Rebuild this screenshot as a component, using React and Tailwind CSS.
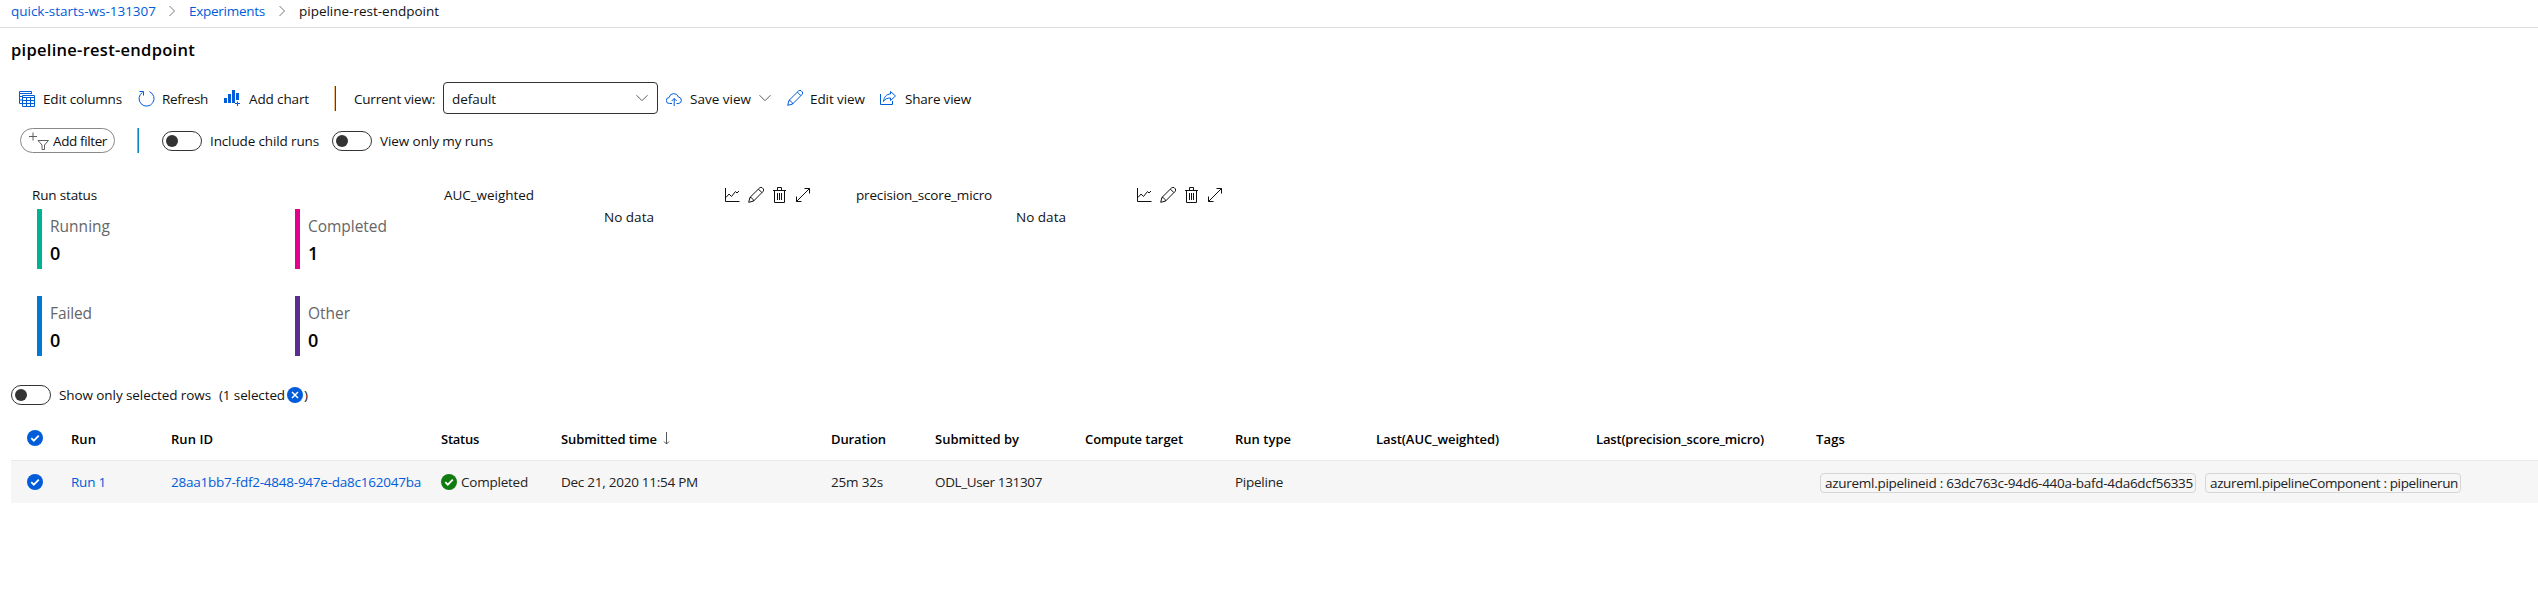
import { useLayoutEffect, useRef } from "react";

// Text run whose tracking is adjusted so that it fills a given width.
function T({ w, className = "", children }) {
  const ref = useRef(null);
  useLayoutEffect(() => {
    const el = ref.current;
    el.style.letterSpacing = "0px";
    const natural = el.getBoundingClientRect().width;
    el.style.letterSpacing = (w - natural) / el.textContent.length + "px";
  }, [w]);
  return (
    <span ref={ref} className={"inline-block w-max shrink-0 whitespace-pre " + className}>
      {children}
    </span>
  );
}

function Svg({ className = "", box = 16, children }) {
  return (
    <svg
      className={"block shrink-0 " + className}
      viewBox={`0 0 ${box} ${box}`}
      fill="none"
      stroke="currentColor"
      strokeWidth="1"
    >
      {children}
    </svg>
  );
}

const Right = ({ className = "" }) => (
  <Svg className={"h-3 w-3 text-[#777] " + className} box={12}>
    <path d="M3.5 1l5 5-5 5" />
  </Svg>
);
const Down = ({ className = "" }) => (
  <Svg className={"h-3 w-3 text-[#605e5c] " + className} box={12}>
    <path d="M.5 3.2L6 8.7l5.500-5.500" />
  </Svg>
);
const Pencil = ({ className = "" }) => (
  <Svg className={"h-4 w-4 " + className}>
    <path d="M.7 15.300l1.200-4.800L11.600.9a1.900 1.900 0 012.700 0l.8.8a1.900 1.900 0 010 2.700L5.500 14.100zM1.900 10.500c1.900 0 3.600 1.700 3.600 3.600M10.400 2.100l3.500 3.500" />
  </Svg>
);
const Check = ({ className = "" }) => (
  <Svg className={"h-4 w-4 " + className}>
    <circle cx="8" cy="8" r="8" fill="currentColor" stroke="none" />
    <path d="M4.300 8.200l2.500 2.500 5-5" stroke="#fff" strokeWidth="1.800" />
  </Svg>
);

function Toggle({ className = "" }) {
  return (
    <span className={"flex h-5 w-10 shrink-0 items-center rounded-full border border-[#333] bg-white pl-[3px] " + className}>
      <span className="h-3 w-3 rounded-full bg-[#333]" />
    </span>
  );
}

function Stat({ bar, label, w, value }) {
  return (
    <div className="flex h-[60px] w-[258px]">
      <div className={"w-[5px] shrink-0 " + bar} />
      <div className="pl-2 pt-[6px]">
        <T w={w} className="block text-[15.500px] leading-[22px] text-[#666]">{label}</T>
        <div className="mt-[3px] text-[18px] font-semibold leading-[26px] text-black">{value}</div>
      </div>
    </div>
  );
}

function Metric({ title, w }) {
  return (
    <section className="w-[412px]">
      <div className="flex h-5 items-center">
        <div className="w-[280px]"><T w={w}>{title}</T></div>
        <Svg className="h-4 w-4">
          <path d="M1.500 1v13.500H15.500M2 10.500l3-3.500 2.500 2.500 4-5 1.500 1.500L15 4" />
        </Svg>
        <Pencil className="ml-2" />
        <Svg className="ml-[7px] h-4 w-4">
          <path d="M2 3.500h13M6.500 3V.5h4V3M3.500 3.500v12h10v-12M6.500 6v7M8.500 6v7M10.500 6v7" />
        </Svg>
        <Svg className="ml-2 h-4 w-4">
          <path d="M1.500 14.500l13-13M9.500 1.500H14.500V6.500M1.500 9.500v5H6.500" />
        </Svg>
      </div>
      <div className="flex h-6 items-center pl-[160px]"><T w={50}>No data</T></div>
    </section>
  );
}

const columns =
  "grid grid-cols-[60px_100px_270px_120px_270px_104px_150px_150px_141px_220px_220px_1fr] items-center justify-items-start";

export default function App() {
  return (
    <div className="h-[609px] w-[2538px] overflow-hidden bg-white font-['Open_Sans','Noto_Sans',sans-serif] text-[13.500px] leading-5 text-[#111]">
      <nav className="flex h-7 items-center border-b border-[#ddd] pb-[6px] pl-[11px] text-[#015cda]">
        <T w={145}>quick-starts-ws-131307</T>
        <Right className="ml-[10px]" />
        <T w={76} className="ml-[11px]">Experiments</T>
        <Right className="ml-[11px]" />
        <T w={140} className="ml-[11px] text-[#111]">pipeline-rest-endpoint</T>
      </nav>

      <h1 className="flex h-[44px] items-center pl-[11px] text-[16.500px] font-semibold text-black">
        <T w={184}>pipeline-rest-endpoint</T>
      </h1>

      <div className="mt-[10px] flex h-8 items-center pl-[19px]">
        <Svg className="mt-px h-4 w-4 text-[#015cda]">
          <path d="M3 12.500H.5V.5h12V3M.5 2.500h12M3.500 4.500h12v11h-12zM3.500 6.500h12M3.500 9.500h12M3.500 12.500h12M7.500 6v9.500M11.500 6v9.500M.5 5.500H3M.5 9H3" />
        </Svg>
        <T w={79} className="ml-2 pt-px">Edit columns</T>
        <Svg className="ml-4 h-[17px] w-[17px] text-[#015cda]" box={17}>
          <path d="M11.500 1.700A7.500 7.500 0 114.500 2.300M1.500 1.500h4v4" />
        </Svg>
        <T w={46} className="ml-[7px] pt-px">Refresh</T>
        <Svg className="ml-4 h-4 w-4 text-[#015cda]">
          <path d="M0 8h3v5H0zM4 4h3v9H4zM8 0h3v13H8zM12 3h3v7h-3z" fill="currentColor" stroke="none" />
          <path d="M13.500 11.500V16M11 13.500h5" />
        </Svg>
        <T w={60} className="ml-[9px] pt-px">Add chart</T>
        <span className="ml-[25px] h-[25px] w-0.5 border-l border-r border-l-[#f0bd85] border-r-[#0a4f8f]" />
        <T w={81} className="ml-[18px] pt-px">Current view:</T>
        <div className="ml-2 flex h-8 w-[215px] items-center justify-between rounded-sm border border-[#333] pl-2 pr-[9px]">
          <T w={44} className="pt-px">default</T>
          <Down />
        </div>
        <Svg className="ml-2 mt-px h-4 w-4 text-[#015cda]">
          <path d="M6 12.500H3.500a3 3 0 01-.4-6 4.800 4.800 0 019.300-.5 3.300 3.300 0 01.4 6.500H10.500M8.200 15V7.500M5.700 10l2.500-2.500 2.500 2.500" />
        </Svg>
        <T w={61} className="ml-2 pt-px">Save view</T>
        <Down className="ml-2" />
        <Pencil className="ml-4 text-[#015cda]" />
        <T w={55} className="ml-[7px] pt-px">Edit view</T>
        <Svg className="ml-[15px] h-4 w-4 text-[#015cda]">
          <path d="M.5 4v10.500h12V11M10.500 1.500l5 4.500-5 4.500V8C7 8 5 9 3.500 11.500 4 7 6.500 4 10.500 4z" />
        </Svg>
        <T w={66} className="ml-[9px] pt-px">Share view</T>
      </div>

      <div className="mt-[14px] flex h-[25px] items-center pl-5">
        <div className="flex h-[25px] w-[95px] items-center rounded-full border border-[#8a8886] pl-2">
          <Svg className="h-5 w-5 text-[#605e5c]" box={20}>
            <path d="M0 5.500h8M4 1.500v8M9 9.500h10.500l-4 4.500v4.500h-2.500V14z" />
          </Svg>
          <T w={54} className="ml-1">Add filter</T>
        </div>
        <span className="ml-[22px] h-[25px] w-0.5 border-l border-r border-l-[#d99a4e] border-r-[#0a86bd]" />
        <Toggle className="ml-[23px]" />
        <T w={109} className="ml-2">Include child runs</T>
        <Toggle className="ml-[13px]" />
        <T w={113} className="ml-2">View only my runs</T>
      </div>

      <div className="mt-[32px] flex h-[171px]">
        <section className="w-[412px] pl-8">
          <div className="flex h-5 items-center"><T w={65}>Run status</T></div>
          <div className="mt-[4px] flex flex-wrap gap-y-[27px] pl-[5px]">
            <Stat bar="bg-[#00b294]" label="Running" w={60} value="0" />
            <div className="w-[117px]"><Stat bar="bg-[#e3008c]" label="Completed" w={79} value="1" /></div>
            <Stat bar="bg-[#0078d4]" label="Failed" w={42} value="0" />
            <div className="w-[117px]"><Stat bar="bg-[#5c2d91]" label="Other" w={42} value="0" /></div>
          </div>
        </section>
        <div className="flex pl-8">
          <Metric title="AUC_weighted" w={90} />
          <Metric title="precision_score_micro" w={136} />
        </div>
      </div>

      <div className="mt-[29px] flex h-5 items-center pl-[11px]">
        <Toggle />
        <T w={152} className="ml-2">Show only selected rows</T>
        <T w={66} className="ml-2">(1 selected</T>
        <Svg className="ml-[2px] h-4 w-4 text-[#015cda]">
          <circle cx="8" cy="8" r="8" fill="currentColor" stroke="none" />
          <path d="M5 5l6 6M11 5l-6 6" stroke="#fff" strokeWidth="1.500" />
        </Svg>
        <span className="ml-px">)</span>
      </div>

      <div className="pl-[11px] pt-[11px]">
        <div className={columns + " h-[45px] border-b border-[#eaeaea] text-[13px] font-semibold text-black"}>
          <Check className="ml-4 text-[#015cda]" />
          <T w={25} className="pt-px">Run</T>
          <T w={42} className="pt-px">Run ID</T>
          <T w={38} className="pt-px">Status</T>
          <span className="flex items-center">
            <T w={96} className="pt-px">Submitted time</T>
            <Svg className="ml-[3px] h-3.5 w-3.5 text-[#555]" box={14}>
              <path d="M6.500 1v12M4 10.500L6.500 13 9 10.500" />
            </Svg>
          </span>
          <T w={55} className="pt-px">Duration</T>
          <T w={84} className="pt-px">Submitted by</T>
          <T w={98} className="pt-px">Compute target</T>
          <T w={56} className="pt-px">Run type</T>
          <T w={123} className="pt-px">Last(AUC_weighted)</T>
          <T w={168} className="pt-px">Last(precision_score_micro)</T>
          <T w={29} className="pt-px">Tags</T>
        </div>
        <div className={columns + " h-[42px] bg-[#f6f6f6] text-[#222]"}>
          <Check className="ml-4 text-[#015cda]" />
          <T w={35} className="text-[#015cda]">Run 1</T>
          <T w={250} className="text-[#015cda]">28aa1bb7-fdf2-4848-947e-da8c162047ba</T>
          <span className="flex items-center">
            <Check className="text-[#107c10]" />
            <T w={67} className="ml-1">Completed</T>
          </span>
          <T w={137}>Dec 21, 2020 11:54 PM</T>
          <T w={52}>25m 32s</T>
          <T w={107}>ODL_User 131307</T>
          <span />
          <T w={48}>Pipeline</T>
          <span />
          <span />
          <span className="flex items-center gap-[9px] pl-1 pt-px">
            <span className="flex h-5 w-[376px] items-center rounded-sm border border-[#d6d6d6] pl-1">
              <T w={368}>azureml.pipelineid : 63dc763c-94d6-440a-bafd-4da6dcf56335</T>
            </span>
            <span className="flex h-5 w-[256px] items-center rounded-sm border border-[#d6d6d6] pl-1">
              <T w={248}>azureml.pipelineComponent : pipelinerun</T>
            </span>
          </span>
        </div>
      </div>
    </div>
  );
}
